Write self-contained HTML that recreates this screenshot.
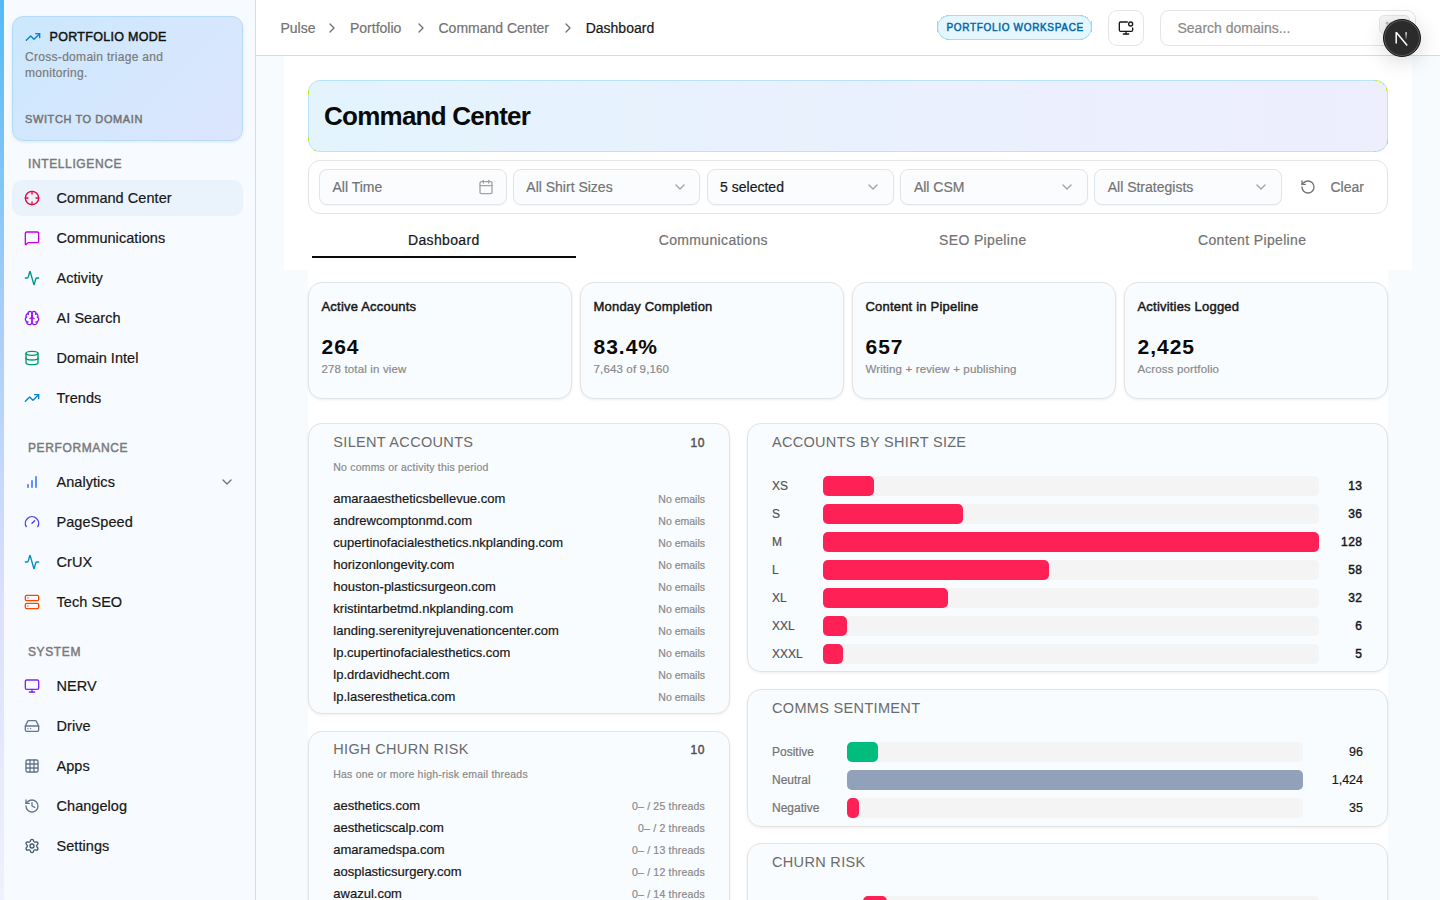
<!DOCTYPE html>
<html><head><meta charset="utf-8"><title>Command Center</title><style>
*{box-sizing:border-box;margin:0;padding:0}
html,body{width:1440px;height:900px;overflow:hidden}
body{font-family:"Liberation Sans",sans-serif;background:#f7fbfe;color:#171717;position:relative}
.t{position:absolute;line-height:1;white-space:nowrap}
.s{-webkit-text-stroke:0.2px currentColor}
.sb{-webkit-text-stroke:0.45px currentColor}
.r{position:absolute}
svg.i{position:absolute;fill:none;stroke:currentColor;stroke-linecap:round;stroke-linejoin:round;overflow:visible}
</style></head><body>
<div class="r" style="left:0px;top:0px;width:256px;height:900px;background:#f7fbff;border-right:1px solid #bae6fd"></div>
<div class="r" style="left:0px;top:0px;width:4px;height:900px;background:linear-gradient(180deg,#52b9f6 0%,#a9cefa 36%,#dadffc 66%,#eff1fd 100%)"></div>
<div class="r" style="left:12px;top:16px;width:231px;height:125px;border:1px solid #b5dcf7;border-radius:11px;background:linear-gradient(135deg,#cbe8fd 0%,#d5e7fd 55%,#dce5fd 100%);box-shadow:0 1px 3px rgba(80,140,200,.18)"></div>
<svg class="i" style="left:25px;top:29px;width:16px;height:16px;color:#0084d1;" viewBox="0 0 24 24" stroke-width="2"><path d="M16 7h6v6"/><path d="m22 7-8.5 8.5-5-5L2 17"/></svg>
<div class="t sb" style="left:49.5px;top:30.88px;font-size:12.5px;font-weight:400;color:#111;letter-spacing:0.3px;">PORTFOLIO MODE</div>
<div class="t s" style="left:25px;top:50.50px;font-size:12px;font-weight:400;color:#7a7a7a;letter-spacing:0.3px;">Cross-domain triage and</div>
<div class="t s" style="left:25px;top:66.50px;font-size:12px;font-weight:400;color:#7a7a7a;letter-spacing:0.3px;">monitoring.</div>
<div class="t sb" style="left:25px;top:113.65px;font-size:11px;font-weight:400;color:#737373;letter-spacing:0.6px;">SWITCH TO DOMAIN</div>
<div class="t sb" style="left:28px;top:157.80px;font-size:12px;font-weight:400;color:#7a7a7a;letter-spacing:0.62px;">INTELLIGENCE</div>
<div class="r" style="left:12px;top:180px;width:231px;height:36px;background:#eaf2fc;border-radius:10px"></div>
<div class="t sb" style="left:28px;top:441.80px;font-size:12px;font-weight:400;color:#7a7a7a;letter-spacing:0.62px;">PERFORMANCE</div>
<div class="t sb" style="left:28px;top:645.80px;font-size:12px;font-weight:400;color:#7a7a7a;letter-spacing:0.62px;">SYSTEM</div>
<svg class="i" style="left:24px;top:190px;width:16px;height:16px;color:#ec003f;" viewBox="0 0 24 24" stroke-width="2"><circle cx="12" cy="12" r="10"/><line x1="22" x2="18" y1="12" y2="12"/><line x1="6" x2="2" y1="12" y2="12"/><line x1="12" x2="12" y1="6" y2="2"/><line x1="12" x2="12" y1="22" y2="18"/></svg>
<div class="t s" style="left:56.5px;top:190.68px;font-size:14.5px;font-weight:400;color:#171717;letter-spacing:0.05px;">Command Center</div>
<svg class="i" style="left:24px;top:230px;width:16px;height:16px;color:#c800de;" viewBox="0 0 24 24" stroke-width="2"><path d="M22 17a2 2 0 0 1-2 2H6.828a2 2 0 0 0-1.414.586l-2.202 2.202A.71.71 0 0 1 2 21.286V5a2 2 0 0 1 2-2h16a2 2 0 0 1 2 2z"/></svg>
<div class="t s" style="left:56.5px;top:230.68px;font-size:14.5px;font-weight:400;color:#171717;letter-spacing:0.05px;">Communications</div>
<svg class="i" style="left:24px;top:270px;width:16px;height:16px;color:#009689;" viewBox="0 0 24 24" stroke-width="2"><path d="M22 12h-2.48a2 2 0 0 0-1.93 1.46l-2.35 8.36a.25.25 0 0 1-.48 0L9.24 2.18a.25.25 0 0 0-.48 0l-2.35 8.36A2 2 0 0 1 4.49 12H2"/></svg>
<div class="t s" style="left:56.5px;top:270.68px;font-size:14.5px;font-weight:400;color:#171717;letter-spacing:0.05px;">Activity</div>
<svg class="i" style="left:24px;top:310px;width:16px;height:16px;color:#9810fa;" viewBox="0 0 24 24" stroke-width="2"><path d="M12 5a3 3 0 1 0-5.997.125 4 4 0 0 0-2.526 5.77 4 4 0 0 0 .556 6.588A4 4 0 1 0 12 18Z"/><path d="M12 5a3 3 0 1 1 5.997.125 4 4 0 0 1 2.526 5.77 4 4 0 0 1-.556 6.588A4 4 0 1 1 12 18Z"/><path d="M15 13a4.5 4.5 0 0 1-3-4 4.5 4.5 0 0 1-3 4"/><path d="M17.599 6.5a3 3 0 0 0 .399-1.375"/><path d="M6.003 5.125A3 3 0 0 0 6.401 6.5"/><path d="M3.477 10.896a4 4 0 0 1 .585-.396"/><path d="M19.938 10.5a4 4 0 0 1 .585.396"/><path d="M6 18a4 4 0 0 1-1.967-.516"/><path d="M19.967 17.484A4 4 0 0 1 18 18"/></svg>
<div class="t s" style="left:56.5px;top:310.68px;font-size:14.5px;font-weight:400;color:#171717;letter-spacing:0.05px;">AI Search</div>
<svg class="i" style="left:24px;top:350px;width:16px;height:16px;color:#009966;" viewBox="0 0 24 24" stroke-width="2"><ellipse cx="12" cy="5" rx="9" ry="3"/><path d="M3 5V19A9 3 0 0 0 21 19V5"/><path d="M3 12A9 3 0 0 0 21 12"/></svg>
<div class="t s" style="left:56.5px;top:350.68px;font-size:14.5px;font-weight:400;color:#171717;letter-spacing:0.05px;">Domain Intel</div>
<svg class="i" style="left:24px;top:390px;width:16px;height:16px;color:#0084d1;" viewBox="0 0 24 24" stroke-width="2"><path d="M16 7h6v6"/><path d="m22 7-8.5 8.5-5-5L2 17"/></svg>
<div class="t s" style="left:56.5px;top:390.68px;font-size:14.5px;font-weight:400;color:#171717;letter-spacing:0.05px;">Trends</div>
<svg class="i" style="left:24px;top:474px;width:16px;height:16px;color:#155dfc;" viewBox="0 0 24 24" stroke-width="2"><line x1="12" x2="12" y1="20" y2="10"/><line x1="18" x2="18" y1="20" y2="4"/><line x1="6" x2="6" y1="20" y2="16"/></svg>
<div class="t s" style="left:56.5px;top:474.68px;font-size:14.5px;font-weight:400;color:#171717;letter-spacing:0.05px;">Analytics</div>
<svg class="i" style="left:24px;top:514px;width:16px;height:16px;color:#4f39f6;" viewBox="0 0 24 24" stroke-width="2"><path d="m12 14 4-4"/><path d="M3.34 19a10 10 0 1 1 17.32 0"/></svg>
<div class="t s" style="left:56.5px;top:514.67px;font-size:14.5px;font-weight:400;color:#171717;letter-spacing:0.05px;">PageSpeed</div>
<svg class="i" style="left:24px;top:554px;width:16px;height:16px;color:#0092b8;" viewBox="0 0 24 24" stroke-width="2"><path d="M22 12h-2.48a2 2 0 0 0-1.93 1.46l-2.35 8.36a.25.25 0 0 1-.48 0L9.24 2.18a.25.25 0 0 0-.48 0l-2.35 8.36A2 2 0 0 1 4.49 12H2"/></svg>
<div class="t s" style="left:56.5px;top:554.67px;font-size:14.5px;font-weight:400;color:#171717;letter-spacing:0.05px;">CrUX</div>
<svg class="i" style="left:24px;top:594px;width:16px;height:16px;color:#f54900;" viewBox="0 0 24 24" stroke-width="2"><rect width="20" height="8" x="2" y="2" rx="2" ry="2"/><rect width="20" height="8" x="2" y="14" rx="2" ry="2"/><line x1="6" x2="6.01" y1="6" y2="6"/><line x1="6" x2="6.01" y1="18" y2="18"/></svg>
<div class="t s" style="left:56.5px;top:594.67px;font-size:14.5px;font-weight:400;color:#171717;letter-spacing:0.05px;">Tech SEO</div>
<svg class="i" style="left:24px;top:678px;width:16px;height:16px;color:#7f22fe;" viewBox="0 0 24 24" stroke-width="2"><rect width="20" height="14" x="2" y="3" rx="2"/><line x1="8" x2="16" y1="21" y2="21"/><line x1="12" x2="12" y1="17" y2="21"/></svg>
<div class="t s" style="left:56.5px;top:678.67px;font-size:14.5px;font-weight:400;color:#171717;letter-spacing:0.05px;">NERV</div>
<svg class="i" style="left:24px;top:718px;width:16px;height:16px;color:#62748e;" viewBox="0 0 24 24" stroke-width="2"><line x1="22" x2="2" y1="12" y2="12"/><path d="M5.45 5.11 2 12v6a2 2 0 0 0 2 2h16a2 2 0 0 0 2-2v-6l-3.45-6.89A2 2 0 0 0 16.76 4H7.24a2 2 0 0 0-1.79 1.11z"/><line x1="6" x2="6.01" y1="16" y2="16"/><line x1="10" x2="10.01" y1="16" y2="16"/></svg>
<div class="t s" style="left:56.5px;top:718.67px;font-size:14.5px;font-weight:400;color:#171717;letter-spacing:0.05px;">Drive</div>
<svg class="i" style="left:24px;top:758px;width:16px;height:16px;color:#62748e;" viewBox="0 0 24 24" stroke-width="2"><rect width="18" height="18" x="3" y="3" rx="2"/><path d="M3 9h18"/><path d="M3 15h18"/><path d="M9 3v18"/><path d="M15 3v18"/></svg>
<div class="t s" style="left:56.5px;top:758.67px;font-size:14.5px;font-weight:400;color:#171717;letter-spacing:0.05px;">Apps</div>
<svg class="i" style="left:24px;top:798px;width:16px;height:16px;color:#62748e;" viewBox="0 0 24 24" stroke-width="2"><path d="M3 12a9 9 0 1 0 9-9 9.75 9.75 0 0 0-6.74 2.74L3 8"/><path d="M3 3v5h5"/><path d="M12 7v5l4 2"/></svg>
<div class="t s" style="left:56.5px;top:798.67px;font-size:14.5px;font-weight:400;color:#171717;letter-spacing:0.05px;">Changelog</div>
<svg class="i" style="left:24px;top:838px;width:16px;height:16px;color:#45556c;" viewBox="0 0 24 24" stroke-width="2"><path d="M9.671 4.136a2.34 2.34 0 0 1 4.659 0 2.34 2.34 0 0 0 3.319 1.915 2.34 2.34 0 0 1 2.33 4.033 2.34 2.34 0 0 0 0 3.831 2.34 2.34 0 0 1-2.33 4.033 2.34 2.34 0 0 0-3.319 1.915 2.34 2.34 0 0 1-4.659 0 2.34 2.34 0 0 0-3.32-1.915 2.34 2.34 0 0 1-2.33-4.033 2.34 2.34 0 0 0 0-3.831A2.34 2.34 0 0 1 6.35 6.051a2.34 2.34 0 0 0 3.319-1.915"/><circle cx="12" cy="12" r="3"/></svg>
<div class="t s" style="left:56.5px;top:838.67px;font-size:14.5px;font-weight:400;color:#171717;letter-spacing:0.05px;">Settings</div>
<svg class="i" style="left:219px;top:474px;width:16px;height:16px;color:#737373;" viewBox="0 0 24 24" stroke-width="2"><path d="m6 9 6 6 6-6"/></svg>
<div class="r" style="left:256px;top:0px;width:1184px;height:56px;background:#fff;border-bottom:1px solid #bae6fd"></div>
<div class="t s" style="left:280.5px;top:21.10px;font-size:14px;font-weight:400;color:#737373;">Pulse</div>
<svg class="i" style="left:324px;top:20px;width:16px;height:16px;color:#737373;" viewBox="0 0 24 24" stroke-width="2"><path d="m9 18 6-6-6-6"/></svg>
<div class="t s" style="left:350px;top:21.10px;font-size:14px;font-weight:400;color:#737373;">Portfolio</div>
<svg class="i" style="left:412.5px;top:20px;width:16px;height:16px;color:#737373;" viewBox="0 0 24 24" stroke-width="2"><path d="m9 18 6-6-6-6"/></svg>
<div class="t s" style="left:438.5px;top:21.10px;font-size:14px;font-weight:400;color:#737373;">Command Center</div>
<svg class="i" style="left:559.7px;top:20px;width:16px;height:16px;color:#737373;" viewBox="0 0 24 24" stroke-width="2"><path d="m9 18 6-6-6-6"/></svg>
<div class="t s" style="left:585.7px;top:21.10px;font-size:14px;font-weight:400;color:#171717;">Dashboard</div>
<div class="r" style="left:937px;top:15px;width:155px;height:25px;background:#e6f6fe;border:1px solid #a6dcf8;border-radius:999px"></div>
<div class="t sb" style="left:946.5px;top:22.70px;font-size:10px;font-weight:400;color:#0069a8;letter-spacing:0.67px;">PORTFOLIO WORKSPACE</div>
<div class="r" style="left:1108px;top:10px;width:36px;height:36px;background:#fff;border:1px solid #e5e5e5;border-radius:9px"></div>
<svg class="i" style="left:1118px;top:20px;width:16px;height:16px;color:#171717;" viewBox="0 0 24 24" stroke-width="2"><circle cx="19" cy="6" r="3"/><path d="M22 12v3a2 2 0 0 1-2 2H4a2 2 0 0 1-2-2V5a2 2 0 0 1 2-2h10"/><path d="M12 17v4"/><path d="M8 21h8"/></svg>
<div class="r" style="left:1160px;top:10px;width:256px;height:36px;background:#fff;border:1px solid #e5e5e5;border-radius:9px"></div>
<div class="t s" style="left:1177.5px;top:21.30px;font-size:14px;font-weight:400;color:#8a8a8a;">Search domains...</div>
<div class="r" style="left:1379px;top:15px;width:31px;height:19px;background:#f5f5f5;border:1px solid #e5e5e5;border-radius:5px"></div>
<svg class="i" style="left:1385px;top:21px;width:8px;height:8px;color:#8a8a8a;" viewBox="0 0 24 24" stroke-width="2"><path d="M15 6v12a3 3 0 1 0 3-3H6a3 3 0 1 0 3 3V6a3 3 0 1 0-3 3h12a3 3 0 1 0-3-3"/></svg>
<div class="r" style="left:284px;top:56px;width:1128px;height:214px;background:#fff"></div>
<div class="r" style="left:308px;top:270px;width:1080px;height:630px;background:#fff"></div>
<div class="r" style="left:308px;top:80px;width:1080px;height:72px;border:1px solid #b8e4fb;border-radius:12px;background:linear-gradient(90deg,#e3f4fd 0%,#e9f1fd 45%,#eeeefd 100%)"></div>
<div class="t" style="left:324px;top:102.90px;font-size:26px;font-weight:700;color:#0a0a0a;letter-spacing:-0.75px;">Command Center</div>
<div class="r" style="left:308px;top:160px;width:1080px;height:54px;background:#fff;border:1px solid #e5e5e5;border-radius:12px"></div>
<div class="r" style="left:319px;top:169px;width:187.7px;height:36px;background:#fbfcfe;border:1px solid #dfe5ec;border-radius:8px;box-shadow:0 1px 2px rgba(0,0,0,.04)"></div>
<div class="t s" style="left:332.5px;top:180.10px;font-size:14px;font-weight:400;color:#737373;">All Time</div>
<svg class="i" style="left:477.7px;top:179px;width:16px;height:16px;color:#a3a3a3;" viewBox="0 0 24 24" stroke-width="2"><path d="M8 2v4"/><path d="M16 2v4"/><rect width="18" height="18" x="3" y="4" rx="2"/><path d="M3 10h18"/></svg>
<div class="r" style="left:512.8px;top:169px;width:187.7px;height:36px;background:#fbfcfe;border:1px solid #dfe5ec;border-radius:8px;box-shadow:0 1px 2px rgba(0,0,0,.04)"></div>
<div class="t s" style="left:526.3px;top:180.10px;font-size:14px;font-weight:400;color:#737373;">All Shirt Sizes</div>
<svg class="i" style="left:671.5px;top:179px;width:16px;height:16px;color:#a3a3a3;" viewBox="0 0 24 24" stroke-width="2"><path d="m6 9 6 6 6-6"/></svg>
<div class="r" style="left:706.6px;top:169px;width:187.7px;height:36px;background:#fbfcfe;border:1px solid #dfe5ec;border-radius:8px;box-shadow:0 1px 2px rgba(0,0,0,.04)"></div>
<div class="t s" style="left:720.1px;top:180.10px;font-size:14px;font-weight:400;color:#171717;">5 selected</div>
<svg class="i" style="left:865.3px;top:179px;width:16px;height:16px;color:#a3a3a3;" viewBox="0 0 24 24" stroke-width="2"><path d="m6 9 6 6 6-6"/></svg>
<div class="r" style="left:900.4px;top:169px;width:187.7px;height:36px;background:#fbfcfe;border:1px solid #dfe5ec;border-radius:8px;box-shadow:0 1px 2px rgba(0,0,0,.04)"></div>
<div class="t s" style="left:913.9px;top:180.10px;font-size:14px;font-weight:400;color:#737373;">All CSM</div>
<svg class="i" style="left:1059.1px;top:179px;width:16px;height:16px;color:#a3a3a3;" viewBox="0 0 24 24" stroke-width="2"><path d="m6 9 6 6 6-6"/></svg>
<div class="r" style="left:1094.2px;top:169px;width:187.7px;height:36px;background:#fbfcfe;border:1px solid #dfe5ec;border-radius:8px;box-shadow:0 1px 2px rgba(0,0,0,.04)"></div>
<div class="t s" style="left:1107.7px;top:180.10px;font-size:14px;font-weight:400;color:#737373;">All Strategists</div>
<svg class="i" style="left:1252.9px;top:179px;width:16px;height:16px;color:#a3a3a3;" viewBox="0 0 24 24" stroke-width="2"><path d="m6 9 6 6 6-6"/></svg>
<svg class="i" style="left:1299.6px;top:179px;width:16px;height:16px;color:#737373;" viewBox="0 0 24 24" stroke-width="2"><path d="M3 12a9 9 0 1 0 9-9 9.75 9.75 0 0 0-6.74 2.74L3 8"/><path d="M3 3v5h5"/></svg>
<div class="t s" style="left:1330.5px;top:180.10px;font-size:14px;font-weight:400;color:#737373;">Clear</div>
<div class="t s" style="left:343.8px;width:200px;text-align:center;top:233.10px;font-size:14px;letter-spacing:0.35px;color:#171717">Dashboard</div>
<div class="t s" style="left:613.3px;width:200px;text-align:center;top:233.10px;font-size:14px;letter-spacing:0.35px;color:#737373">Communications</div>
<div class="t s" style="left:882.8px;width:200px;text-align:center;top:233.10px;font-size:14px;letter-spacing:0.35px;color:#737373">SEO Pipeline</div>
<div class="t s" style="left:1152.2px;width:200px;text-align:center;top:233.10px;font-size:14px;letter-spacing:0.35px;color:#737373">Content Pipeline</div>
<div class="r" style="left:312px;top:256px;width:264px;height:2px;background:#0a0a0a"></div>
<div class="r" style="left:308px;top:282px;width:264px;height:117px;background:#f9fcff;border:1px solid #e3e3e3;border-radius:14px;box-shadow:0 1px 3px rgba(0,0,0,.07)"></div>
<div class="t sb" style="left:321.5px;top:300.25px;font-size:13px;font-weight:400;color:#171717;letter-spacing:0.2px;">Active Accounts</div>
<div class="t" style="left:321.5px;top:336.15px;font-size:21px;font-weight:700;color:#0a0a0a;letter-spacing:1px;">264</div>
<div class="t s" style="left:321.5px;top:364.03px;font-size:11.5px;font-weight:400;color:#8a8a8a;letter-spacing:0.15px;">278 total in view</div>
<div class="r" style="left:580px;top:282px;width:264px;height:117px;background:#f9fcff;border:1px solid #e3e3e3;border-radius:14px;box-shadow:0 1px 3px rgba(0,0,0,.07)"></div>
<div class="t sb" style="left:593.5px;top:300.25px;font-size:13px;font-weight:400;color:#171717;letter-spacing:0.2px;">Monday Completion</div>
<div class="t" style="left:593.5px;top:336.15px;font-size:21px;font-weight:700;color:#0a0a0a;letter-spacing:1px;">83.4%</div>
<div class="t s" style="left:593.5px;top:364.03px;font-size:11.5px;font-weight:400;color:#8a8a8a;letter-spacing:0.15px;">7,643 of 9,160</div>
<div class="r" style="left:852px;top:282px;width:264px;height:117px;background:#f9fcff;border:1px solid #e3e3e3;border-radius:14px;box-shadow:0 1px 3px rgba(0,0,0,.07)"></div>
<div class="t sb" style="left:865.5px;top:300.25px;font-size:13px;font-weight:400;color:#171717;letter-spacing:0.2px;">Content in Pipeline</div>
<div class="t" style="left:865.5px;top:336.15px;font-size:21px;font-weight:700;color:#0a0a0a;letter-spacing:1px;">657</div>
<div class="t s" style="left:865.5px;top:364.03px;font-size:11.5px;font-weight:400;color:#8a8a8a;letter-spacing:0.15px;">Writing + review + publishing</div>
<div class="r" style="left:1124px;top:282px;width:264px;height:117px;background:#f9fcff;border:1px solid #e3e3e3;border-radius:14px;box-shadow:0 1px 3px rgba(0,0,0,.07)"></div>
<div class="t sb" style="left:1137.5px;top:300.25px;font-size:13px;font-weight:400;color:#171717;letter-spacing:0.2px;">Activities Logged</div>
<div class="t" style="left:1137.5px;top:336.15px;font-size:21px;font-weight:700;color:#0a0a0a;letter-spacing:1px;">2,425</div>
<div class="t s" style="left:1137.5px;top:364.03px;font-size:11.5px;font-weight:400;color:#8a8a8a;letter-spacing:0.15px;">Across portfolio</div>
<div class="r" style="left:308px;top:423px;width:422px;height:291px;background:#f9fcff;border:1px solid #e3e3e3;border-radius:14px;box-shadow:0 1px 3px rgba(0,0,0,.07)"></div>
<div class="t" style="left:333.3px;top:434.68px;font-size:14.5px;font-weight:400;color:#6b6b6b;letter-spacing:0.33px;">SILENT ACCOUNTS</div>
<div class="t sb" style="right:735px;top:436.80px;font-size:12px;font-weight:400;color:#525252;letter-spacing:0.6px;">10</div>
<div class="t s" style="left:333.3px;top:462.38px;font-size:10.5px;font-weight:400;color:#8a8a8a;letter-spacing:0.2px;">No comms or activity this period</div>
<div class="t s" style="left:333.3px;top:491.65px;font-size:13px;font-weight:400;color:#171717;">amaraaestheticsbellevue.com</div>
<div class="t s" style="right:735px;top:493.77px;font-size:10.5px;font-weight:400;color:#8a8a8a;">No emails</div>
<div class="t s" style="left:333.3px;top:513.65px;font-size:13px;font-weight:400;color:#171717;">andrewcomptonmd.com</div>
<div class="t s" style="right:735px;top:515.78px;font-size:10.5px;font-weight:400;color:#8a8a8a;">No emails</div>
<div class="t s" style="left:333.3px;top:535.65px;font-size:13px;font-weight:400;color:#171717;">cupertinofacialesthetics.nkplanding.com</div>
<div class="t s" style="right:735px;top:537.78px;font-size:10.5px;font-weight:400;color:#8a8a8a;">No emails</div>
<div class="t s" style="left:333.3px;top:557.65px;font-size:13px;font-weight:400;color:#171717;">horizonlongevity.com</div>
<div class="t s" style="right:735px;top:559.78px;font-size:10.5px;font-weight:400;color:#8a8a8a;">No emails</div>
<div class="t s" style="left:333.3px;top:579.65px;font-size:13px;font-weight:400;color:#171717;">houston-plasticsurgeon.com</div>
<div class="t s" style="right:735px;top:581.78px;font-size:10.5px;font-weight:400;color:#8a8a8a;">No emails</div>
<div class="t s" style="left:333.3px;top:601.65px;font-size:13px;font-weight:400;color:#171717;">kristintarbetmd.nkplanding.com</div>
<div class="t s" style="right:735px;top:603.78px;font-size:10.5px;font-weight:400;color:#8a8a8a;">No emails</div>
<div class="t s" style="left:333.3px;top:623.65px;font-size:13px;font-weight:400;color:#171717;">landing.serenityrejuvenationcenter.com</div>
<div class="t s" style="right:735px;top:625.78px;font-size:10.5px;font-weight:400;color:#8a8a8a;">No emails</div>
<div class="t s" style="left:333.3px;top:645.65px;font-size:13px;font-weight:400;color:#171717;">lp.cupertinofacialesthetics.com</div>
<div class="t s" style="right:735px;top:647.78px;font-size:10.5px;font-weight:400;color:#8a8a8a;">No emails</div>
<div class="t s" style="left:333.3px;top:667.65px;font-size:13px;font-weight:400;color:#171717;">lp.drdavidhecht.com</div>
<div class="t s" style="right:735px;top:669.78px;font-size:10.5px;font-weight:400;color:#8a8a8a;">No emails</div>
<div class="t s" style="left:333.3px;top:689.65px;font-size:13px;font-weight:400;color:#171717;">lp.laseresthetica.com</div>
<div class="t s" style="right:735px;top:691.78px;font-size:10.5px;font-weight:400;color:#8a8a8a;">No emails</div>
<div class="r" style="left:308px;top:731px;width:422px;height:200px;background:#f9fcff;border:1px solid #e3e3e3;border-radius:14px;box-shadow:0 1px 3px rgba(0,0,0,.07)"></div>
<div class="t" style="left:333.3px;top:741.67px;font-size:14.5px;font-weight:400;color:#6b6b6b;letter-spacing:0.33px;">HIGH CHURN RISK</div>
<div class="t sb" style="right:735px;top:743.80px;font-size:12px;font-weight:400;color:#525252;letter-spacing:0.6px;">10</div>
<div class="t s" style="left:333.3px;top:769.08px;font-size:10.5px;font-weight:400;color:#8a8a8a;letter-spacing:0.2px;">Has one or more high-risk email threads</div>
<div class="t s" style="left:333.3px;top:799.15px;font-size:13px;font-weight:400;color:#171717;">aesthetics.com</div>
<div class="t s" style="right:735px;top:801.28px;font-size:10.5px;font-weight:400;color:#8a8a8a;letter-spacing:0.2px;">0&#8211; / 25 threads</div>
<div class="t s" style="left:333.3px;top:821.15px;font-size:13px;font-weight:400;color:#171717;">aestheticscalp.com</div>
<div class="t s" style="right:735px;top:823.28px;font-size:10.5px;font-weight:400;color:#8a8a8a;letter-spacing:0.2px;">0&#8211; / 2 threads</div>
<div class="t s" style="left:333.3px;top:843.15px;font-size:13px;font-weight:400;color:#171717;">amaramedspa.com</div>
<div class="t s" style="right:735px;top:845.28px;font-size:10.5px;font-weight:400;color:#8a8a8a;letter-spacing:0.2px;">0&#8211; / 13 threads</div>
<div class="t s" style="left:333.3px;top:865.15px;font-size:13px;font-weight:400;color:#171717;">aosplasticsurgery.com</div>
<div class="t s" style="right:735px;top:867.28px;font-size:10.5px;font-weight:400;color:#8a8a8a;letter-spacing:0.2px;">0&#8211; / 12 threads</div>
<div class="t s" style="left:333.3px;top:887.15px;font-size:13px;font-weight:400;color:#171717;">awazul.com</div>
<div class="t s" style="right:735px;top:889.28px;font-size:10.5px;font-weight:400;color:#8a8a8a;letter-spacing:0.2px;">0&#8211; / 14 threads</div>
<div class="r" style="left:747px;top:423px;width:641px;height:249px;background:#f9fcff;border:1px solid #e3e3e3;border-radius:14px;box-shadow:0 1px 3px rgba(0,0,0,.07)"></div>
<div class="t" style="left:772px;top:434.68px;font-size:14.5px;font-weight:400;color:#6b6b6b;letter-spacing:0.3px;">ACCOUNTS BY SHIRT SIZE</div>
<div class="t s" style="left:772px;top:480.00px;font-size:12px;font-weight:400;color:#525252;">XS</div>
<div class="r" style="left:823px;top:476px;width:496px;height:20px;background:#f4f4f4;border-radius:5px"></div>
<div class="r" style="left:823px;top:476px;width:51.2px;height:20px;background:#ff2056;border-radius:5px"></div>
<div class="t sb" style="right:77.5px;top:480.00px;font-size:12px;font-weight:400;color:#171717;letter-spacing:0.5px;">13</div>
<div class="t s" style="left:772px;top:508.00px;font-size:12px;font-weight:400;color:#525252;">S</div>
<div class="r" style="left:823px;top:504px;width:496px;height:20px;background:#f4f4f4;border-radius:5px"></div>
<div class="r" style="left:823px;top:504px;width:140.3px;height:20px;background:#ff2056;border-radius:5px"></div>
<div class="t sb" style="right:77.5px;top:508.00px;font-size:12px;font-weight:400;color:#171717;letter-spacing:0.5px;">36</div>
<div class="t s" style="left:772px;top:536.00px;font-size:12px;font-weight:400;color:#525252;">M</div>
<div class="r" style="left:823px;top:532px;width:496px;height:20px;background:#f4f4f4;border-radius:5px"></div>
<div class="r" style="left:823px;top:532px;width:496px;height:20px;background:#ff2056;border-radius:5px"></div>
<div class="t sb" style="right:77.5px;top:536.00px;font-size:12px;font-weight:400;color:#171717;letter-spacing:0.5px;">128</div>
<div class="t s" style="left:772px;top:564.00px;font-size:12px;font-weight:400;color:#525252;">L</div>
<div class="r" style="left:823px;top:560px;width:496px;height:20px;background:#f4f4f4;border-radius:5px"></div>
<div class="r" style="left:823px;top:560px;width:225.6px;height:20px;background:#ff2056;border-radius:5px"></div>
<div class="t sb" style="right:77.5px;top:564.00px;font-size:12px;font-weight:400;color:#171717;letter-spacing:0.5px;">58</div>
<div class="t s" style="left:772px;top:592.00px;font-size:12px;font-weight:400;color:#525252;">XL</div>
<div class="r" style="left:823px;top:588px;width:496px;height:20px;background:#f4f4f4;border-radius:5px"></div>
<div class="r" style="left:823px;top:588px;width:124.8px;height:20px;background:#ff2056;border-radius:5px"></div>
<div class="t sb" style="right:77.5px;top:592.00px;font-size:12px;font-weight:400;color:#171717;letter-spacing:0.5px;">32</div>
<div class="t s" style="left:772px;top:620.00px;font-size:12px;font-weight:400;color:#525252;">XXL</div>
<div class="r" style="left:823px;top:616px;width:496px;height:20px;background:#f4f4f4;border-radius:5px"></div>
<div class="r" style="left:823px;top:616px;width:24.1px;height:20px;background:#ff2056;border-radius:5px"></div>
<div class="t sb" style="right:77.5px;top:620.00px;font-size:12px;font-weight:400;color:#171717;letter-spacing:0.5px;">6</div>
<div class="t s" style="left:772px;top:648.00px;font-size:12px;font-weight:400;color:#525252;">XXXL</div>
<div class="r" style="left:823px;top:644px;width:496px;height:20px;background:#f4f4f4;border-radius:5px"></div>
<div class="r" style="left:823px;top:644px;width:20.2px;height:20px;background:#ff2056;border-radius:5px"></div>
<div class="t sb" style="right:77.5px;top:648.00px;font-size:12px;font-weight:400;color:#171717;letter-spacing:0.5px;">5</div>
<div class="r" style="left:747px;top:689px;width:641px;height:138px;background:#f9fcff;border:1px solid #e3e3e3;border-radius:14px;box-shadow:0 1px 3px rgba(0,0,0,.07)"></div>
<div class="t" style="left:772px;top:701.17px;font-size:14.5px;font-weight:400;color:#6b6b6b;letter-spacing:0.33px;">COMMS SENTIMENT</div>
<div class="t s" style="left:772px;top:746.00px;font-size:12px;font-weight:400;color:#737373;">Positive</div>
<div class="r" style="left:847px;top:742px;width:456px;height:20px;background:#f4f4f4;border-radius:5px"></div>
<div class="r" style="left:847px;top:742px;width:30.7px;height:20px;background:#00bc7d;border-radius:5px"></div>
<div class="t s" style="right:77px;top:745.58px;font-size:12.5px;font-weight:400;color:#171717;">96</div>
<div class="t s" style="left:772px;top:774.00px;font-size:12px;font-weight:400;color:#737373;">Neutral</div>
<div class="r" style="left:847px;top:770px;width:456px;height:20px;background:#f4f4f4;border-radius:5px"></div>
<div class="r" style="left:847px;top:770px;width:456.0px;height:20px;background:#90a1b9;border-radius:5px"></div>
<div class="t s" style="right:77px;top:773.58px;font-size:12.5px;font-weight:400;color:#171717;">1,424</div>
<div class="t s" style="left:772px;top:802.00px;font-size:12px;font-weight:400;color:#737373;">Negative</div>
<div class="r" style="left:847px;top:798px;width:456px;height:20px;background:#f4f4f4;border-radius:5px"></div>
<div class="r" style="left:847px;top:798px;width:12px;height:20px;background:#ff2056;border-radius:5px"></div>
<div class="t s" style="right:77px;top:801.58px;font-size:12.5px;font-weight:400;color:#171717;">35</div>
<div class="r" style="left:747px;top:843px;width:641px;height:120px;background:#f9fcff;border:1px solid #e3e3e3;border-radius:14px;box-shadow:0 1px 3px rgba(0,0,0,.07)"></div>
<div class="t" style="left:772px;top:854.67px;font-size:14.5px;font-weight:400;color:#6b6b6b;letter-spacing:0.33px;">CHURN RISK</div>
<div class="r" style="left:863px;top:896px;width:456px;height:20px;background:#f4f4f4;border-radius:5px"></div>
<div class="r" style="left:863px;top:896px;width:24px;height:20px;background:#ff2056;border-radius:5px"></div>
<div class="r" style="left:937px;top:21px;width:1px;height:11px;background:#c6e832"></div>
<div class="r" style="left:946px;top:15px;width:4px;height:1px;background:#c6e832"></div>
<div class="r" style="left:946px;top:39px;width:4px;height:1px;background:#c6e832"></div>
<div class="r" style="left:941px;top:17px;width:1px;height:1px;background:#c6e832"></div>
<div class="r" style="left:943px;top:16px;width:1px;height:1px;background:#c6e832"></div>
<div class="r" style="left:940px;top:35px;width:1px;height:1px;background:#c6e832"></div>
<div class="r" style="left:942px;top:37px;width:1px;height:1px;background:#c6e832"></div>
<div class="r" style="left:1091px;top:21px;width:1px;height:11px;background:#c6e832"></div>
<div class="r" style="left:1079px;top:15px;width:4px;height:1px;background:#c6e832"></div>
<div class="r" style="left:1079px;top:39px;width:4px;height:1px;background:#c6e832"></div>
<div class="r" style="left:1087px;top:17px;width:1px;height:1px;background:#c6e832"></div>
<div class="r" style="left:1085px;top:16px;width:1px;height:1px;background:#c6e832"></div>
<div class="r" style="left:1088px;top:35px;width:1px;height:1px;background:#c6e832"></div>
<div class="r" style="left:1086px;top:37px;width:1px;height:1px;background:#c6e832"></div>
<div class="r" style="left:308px;top:90px;width:1px;height:5px;background:#c6e832"></div>
<div class="r" style="left:308px;top:137px;width:1px;height:4px;background:#c6e832"></div>
<div class="r" style="left:314px;top:150px;width:2px;height:1px;background:#c6e832"></div>
<div class="r" style="left:1375px;top:80px;width:2px;height:1px;background:#c6e832"></div>
<div class="r" style="left:1380px;top:82px;width:1px;height:1px;background:#c6e832"></div>
<div class="r" style="left:1383px;top:84px;width:1px;height:1px;background:#c6e832"></div>
<div class="r" style="left:1386px;top:88px;width:1px;height:3px;background:#c6e832"></div>
<div class="r" style="left:1387px;top:140px;width:1px;height:4px;background:#c6e832"></div>
<div class="r" style="left:1383px;top:148px;width:1px;height:1px;background:#c6e832"></div>
<div class="r" style="left:1379px;top:150px;width:1px;height:1px;background:#c6e832"></div>
<div class="r" style="left:1374px;top:151px;width:2px;height:1px;background:#c6e832"></div>
<div class="r" style="left:1383px;top:19px;width:38px;height:38px;border-radius:50%;background:#2b2b2b;border:1px solid #161616;box-shadow:inset 0 0 0 1px #5a5a5a,0 4px 22px rgba(0,0,0,.16)"></div>
<svg style="position:absolute;left:1392px;top:28px;width:20px;height:20px" viewBox="0 0 20 20"><defs><linearGradient id="ng" gradientUnits="userSpaceOnUse" x1="0" y1="4" x2="0" y2="12"><stop offset="0" stop-color="#fff"/><stop offset="1" stop-color="#fff" stop-opacity="0"/></linearGradient></defs><path d="M4.2 4.3v11.3" stroke="#fff" stroke-width="1.5"/><path d="M4.2 4.3 15.2 17.4" stroke="#fff" stroke-width="1.5"/><path d="M14.1 4.3v7.2" stroke="url(#ng)" stroke-width="1.5"/></svg>
</body></html>
